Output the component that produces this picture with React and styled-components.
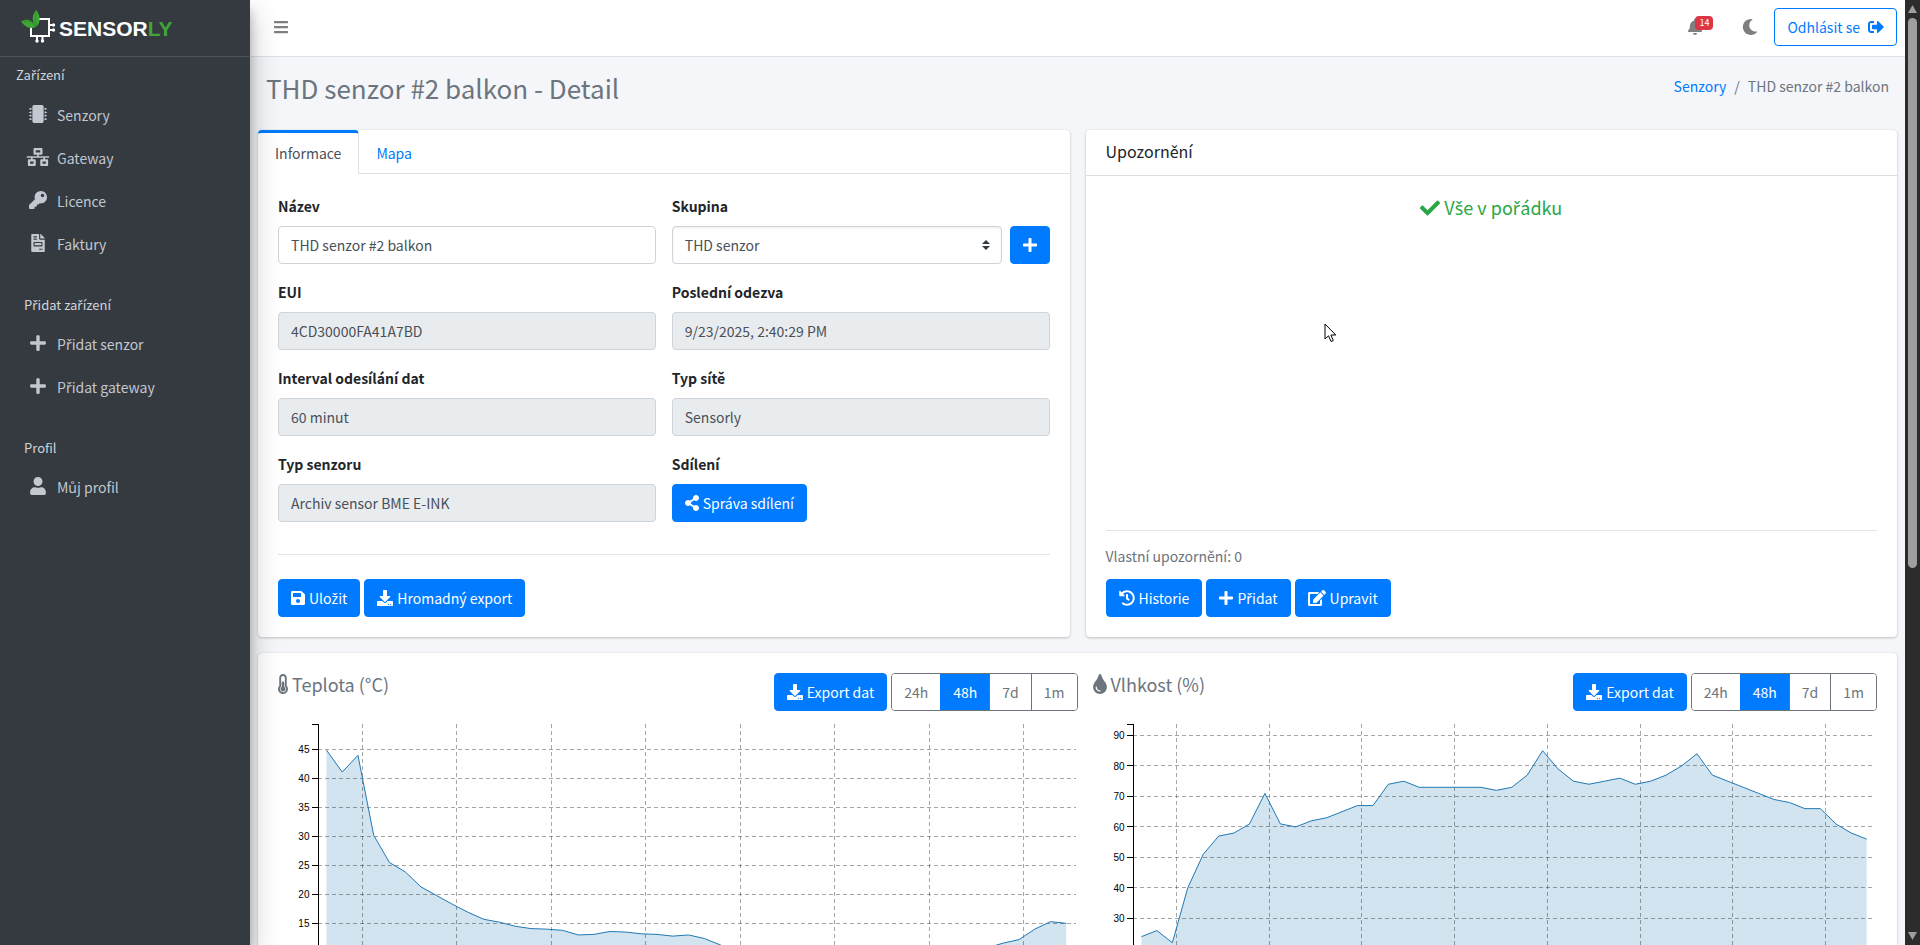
import React from "react";
import styled, { createGlobalStyle } from "styled-components";
import {
	FaBars,
	FaBell,
	FaCheck,
	FaDownload,
	FaEdit,
	FaFileInvoice,
	FaHistory,
	FaKey,
	FaMicrochip,
	FaMoon,
	FaNetworkWired,
	FaPlus,
	FaSave,
	FaShareAlt,
	FaSignOutAlt,
	FaThermometerHalf,
	FaTint,
	FaUser,
} from "react-icons/fa";

const GlobalStyle = createGlobalStyle`
	* {
		box-sizing: border-box;
	}

	body {
		margin: 0;
		background: #f4f6f9;
		color: #212529;
		font-family: "Noto Sans CJK SC", "Noto Sans", sans-serif;
		font-size: 14px;
		line-height: 24px;
	}

	button, input, select {
		font: inherit;
	}

	a {
		color: #007bff;
		text-decoration: none;
	}
`;

const Shell = styled.div`
	display: flex;
	height: 100vh;
	overflow: hidden;
`;

const Sidebar = styled.aside`
	position: relative;
	z-index: 2;
	flex: 0 0 250px;
	background: #343a40;
	box-shadow: 0 14px 28px rgba(0, 0, 0, .25), 0 10px 10px rgba(0, 0, 0, .22);
`;

const Brand = styled.a`
	display: flex;
	height: 57px;
	padding: 9px 20px;
	border-bottom: 1px solid #4b545c;
`;

const NavHeader = styled.h2`
	margin: 0;
	padding: ${(props) => (props.$top ? "6px 16px 8px" : "29px 24px 7px")};
	color: #d0d4db;
	font-size: 13px;
	font-weight: 400;
	line-height: 24px;
`;

const NavList = styled.nav`
	display: flex;
	flex-direction: column;
	gap: 3px;
	padding: 0 8px;
`;

const NavLink = styled.a`
	display: flex;
	align-items: center;
	gap: 5px;
	height: 40px;
	padding: 0 16px;
	color: #c2c7d0;

	svg {
		width: 28px;
		height: 18px;
		margin-bottom: 2px;
	}
`;

const Page = styled.div`
	flex: 1;
	min-width: 0;
`;

const Topbar = styled.header`
	display: flex;
	align-items: center;
	height: 57px;
	padding: 0 8px 2px 24px;
	background: #fff;
	border-bottom: 1px solid #dee2e6;
`;

const IconButton = styled.button`
	position: relative;
	display: flex;
	padding: 0;
	margin-right: ${(props) => props.$gap || 0}px;
	border: 0;
	background: none;
	color: #7f7f7f;
	font-size: 16px;

	svg {
		width: ${(props) => props.$icon || 16}px;
	}
`;

const Badge = styled.span`
	position: absolute;
	top: -3px;
	left: 7px;
	padding: 0 4px;
	border-radius: 4px;
	background: #dc3545;
	color: #fff;
	font-size: 9px;
	line-height: 14px;
`;

const Spacer = styled.div`
	flex: 1;
`;

const Button = styled.button`
	display: inline-flex;
	align-items: center;
	justify-content: center;
	gap: ${(props) => props.$gap || 4}px;
	height: 38px;
	padding: 0 12px;
	border: 1px solid #007bff;
	border-radius: 4px;
	background: ${(props) => (props.$outline ? "#fff" : "#007bff")};
	color: ${(props) => (props.$outline ? "#007bff" : "#fff")};
	white-space: nowrap;

	svg {
		width: ${(props) => props.$icon || 16}px;
		font-size: 16px;
	}
`;

const TitleRow = styled.div`
	display: flex;
	justify-content: space-between;
	padding: 13px 16px 25px;
`;

const Title = styled.h1`
	margin: 0;
	color: #6c757d;
	font-size: 26px;
	font-weight: 400;
	line-height: 35px;
`;

const Breadcrumb = styled.nav`
	display: flex;
	gap: 8px;
	padding-top: 4px;
	color: #6c757d;
`;

const Content = styled.main`
	display: grid;
	grid-template-columns: 1fr 1fr;
	gap: 16px;
	padding: 0 8px;
`;

const Card = styled.section`
	display: flex;
	flex-direction: column;
	grid-column: ${(props) => (props.$wide ? "1 / -1" : "auto")};
	border-radius: 4px;
	background: #fff;
	box-shadow: 0 0 1px rgba(0, 0, 0, .125), 0 1px 3px rgba(0, 0, 0, .2);
`;

const CardBody = styled.div`
	display: flex;
	flex: 1;
	flex-direction: column;
	padding: 20px;
`;

const Tabs = styled.div`
	display: flex;
	height: 44px;
	border-bottom: 1px solid #dee2e6;
`;

const Tab = styled.button`
	height: ${(props) => (props.$active ? 44 : 43)}px;
	padding: ${(props) => (props.$active ? "0 17px 2px" : "3px 17px 0")};
	border: solid transparent;
	border-width: 0 1px 0 0;
	border-radius: 4px 4px 0 0;
	background: none;
	color: #007bff;

	${(props) => props.$active && `
		border-top: 3px solid #007bff;
		border-right-color: #dee2e6;
		background: #fff;
		color: #495057;
	`}
`;

const CardTitle = styled.h2`
	margin: 0;
	padding: 11px 20px 13px;
	border-bottom: 1px solid #dfdfdf;
	font-size: 16px;
	font-weight: 400;
	line-height: 21px;
`;

const FormGrid = styled.form`
	display: grid;
	grid-template-columns: 1fr 1fr;
	gap: 16px;
`;

const Field = styled.div`
	display: flex;
	flex-direction: column;
	align-items: flex-start;
	gap: 8px;
`;

const Label = styled.label`
	font-weight: 700;
`;

const Input = styled.input`
	width: 100%;
	height: 38px;
	padding: 0 12px;
	border: 1px solid #ced4da;
	border-radius: 4px;
	background: ${(props) => (props.readOnly ? "#e9ecef" : "#fff")};
	color: #495057;
`;

const SelectRow = styled.div`
	display: flex;
	gap: 8px;
	width: 100%;
`;

const SelectBox = styled.div`
	display: grid;
	flex: 1;
	align-items: center;

	> * {
		grid-area: 1 / 1;
	}

	svg {
		justify-self: end;
		margin-right: 12px;
		pointer-events: none;
	}
`;

const Select = styled.select`
	width: 100%;
	height: 38px;
	padding: 0 12px;
	border: 1px solid #ced4da;
	border-radius: 4px;
	background: #fff;
	box-shadow: inset 0 1px 2px rgba(0, 0, 0, .075);
	color: #495057;
	appearance: none;
`;

const Divider = styled.hr`
	width: 100%;
	margin: ${(props) => (props.$push ? "auto 0 13px" : "32px 0 24px")};
	border: 0;
	border-top: 1px solid #e2e3e5;
`;

const ButtonRow = styled.div`
	display: flex;
	gap: 4px;
`;

const Status = styled.p`
	display: flex;
	align-items: center;
	justify-content: center;
	gap: 4px;
	margin: 0;
	color: #28a745;
	font-size: 18px;
	line-height: 22px;

	svg {
		font-size: 20px;
	}
`;

const Note = styled.p`
	margin: 0 0 11px;
	color: #6c757d;
`;

const ChartGrid = styled.div`
	display: grid;
	grid-template-columns: 1fr 1fr;
`;

const ChartPanel = styled.div`
	padding-left: ${(props) => (props.$second ? 15 : 0)}px;

	> svg {
		display: block;
		width: 100%;
		margin-top: 8px;
	}
`;

const ChartHead = styled.div`
	display: flex;
	justify-content: space-between;
	align-items: flex-start;
`;

const ChartTitle = styled.h3`
	display: flex;
	align-items: center;
	gap: 4px;
	margin: 0;
	color: #6c757d;
	font-size: 18px;
	font-weight: 400;
	line-height: 22px;

	svg {
		width: ${(props) => props.$icon}px;
		font-size: 20px;
	}
`;

const RangeGroup = styled.div`
	display: flex;
	overflow: hidden;
	border: 1px solid #6c757d;
	border-radius: 4px;
`;

const RangeButton = styled.button`
	height: 36px;
	padding: 0 12px;
	border: 0;
	border-left: ${(props) => (props.$first ? 0 : 1)}px solid ${(props) => (props.$active ? "#007bff" : "#6c757d")};
	background: ${(props) => (props.$active ? "#007bff" : "#fff")};
	color: ${(props) => (props.$active ? "#fff" : "#6c757d")};
`;

const AxisLabel = styled.text`
	fill: #000;
	font-family: "Liberation Sans", Arial, sans-serif;
	font-size: 10px;
	text-anchor: end;
`;

const Scrollbar = styled.div`
	display: flex;
	flex: 0 0 15px;
	flex-direction: column;
	align-items: center;
	justify-content: space-between;
	padding: 5px 0;
	background: #2c2c2c;
`;

const ScrollTrack = styled.div`
	flex: 1;
	width: 9px;
	margin: 5px 0;
`;

const ScrollThumb = styled.div`
	height: 60.5%;
	border-radius: 5px;
	background: #9f9f9f;
`;

const Pointer = styled.svg`
	position: absolute;
	top: 323px;
	left: 1324px;
	z-index: 3;
`;

const Accented = styled.span`
	font-family: "Noto Sans", sans-serif;
`;

const temperature = [
	44.9, 41.1, 44, 30.2, 25.5, 23.9, 21.3, 19.8, 18.3, 16.9, 15.7, 15.2,
	14.5, 14.1, 14, 13.8, 13, 13.1, 13.6, 13.5, 13.2, 13.1, 12.8, 13,
	12.4, 11.3, 10.2, 9.6, 9.1, 8.8, 8.5, 8.2, 8, 7.9, 7.8, 7.8,
	7.9, 8.1, 8.4, 8.8, 9.3, 10, 10.8, 11.6, 12.2, 14, 15.3, 15,
];

const humidity = [
	24, 26, 22, 40, 51, 57, 58, 61, 71, 61, 60, 62,
	63, 65, 67, 67, 74, 75, 73, 73, 73, 73, 73, 72,
	73, 77, 85, 79, 75, 74, 75, 76, 74, 75, 77, 80,
	84, 77, 75, 73, 71, 69, 68, 66, 66, 61, 58, 56,
];

const navSections = [
	{
		title: "Zařízení",
		items: [
			{ icon: FaMicrochip, text: "Senzory" },
			{ icon: FaNetworkWired, text: "Gateway" },
			{ icon: FaKey, text: "Licence" },
			{ icon: FaFileInvoice, text: "Faktury" },
		],
	},
	{
		title: "Přidat zařízení",
		items: [
			{ icon: FaPlus, text: "Přidat senzor" },
			{ icon: FaPlus, text: "Přidat gateway" },
		],
	},
	{
		title: "Profil",
		items: [{ icon: FaUser, text: "Můj profil" }],
	},
];

// The page font has no ř, š and ž, those letters come from Noto Sans.
const Czech = ({ children }) => (
	<span>
		{children.split(/([řšž])/).map((part, i) => (
			i % 2 ? <Accented key={i}>{part}</Accented> : part
		))}
	</span>
);

const Logo = () => (
	<svg width="170" height="36" viewBox="0 0 170 36" role="img" aria-label="Sensorly">
		<g fill="none" stroke="#fff" strokeWidth="2">
			<path d="M18 10H29V27H11V18" />
			<path d="M29 16H33M29 21H33M17 27V31M22.500 27V31" />
		</g>
		<g fill="#fff">
			<circle cx="33.500" cy="16" r="1.700" />
			<circle cx="33.500" cy="21" r="1.700" />
			<circle cx="17" cy="32" r="1.700" />
			<circle cx="22.500" cy="32" r="1.700" />
		</g>
		<path d="M16 18C11 20.500 5 18.500 1 12.500C6 9.500 12 10 16 18Z" fill="#3fa535" />
		<path d="M16 18C11 12 12 5 16.500 1C20 6 21.500 13 16 18Z" fill="#3fa535" />
		<path d="M16 18C11 12 9 12 3 12.500M16 18C15 12 15 8 16.500 3" fill="none" stroke="#2b7f27" strokeWidth=".6" />
		<text x="39" y="27" fill="#fff" fontFamily="Liberation Sans, Arial, sans-serif" fontWeight="700" fontSize="21">
			SENSOR<tspan fill="#3fa535">LY</tspan>
		</text>
	</svg>
);

// Coordinates are in the chart's own units, the svg scales with its column.
const AreaChart = ({ width, axisX, endX, firstX, step, ticks, tickY, tickGap, lineX, lineGap, perUnit, data, label }) => {
	const y = (value) => tickY + (ticks[0] - value) * perUnit;
	const points = data.map((value, i) => `${firstX + i * step},${y(value)}`);
	const lastX = firstX + (data.length - 1) * step;
	return (
		<svg viewBox={`0 0 ${width} 300`} role="img" aria-label={label}>
			<path
				d={`M${points.join("L")}L${lastX},290L${firstX},290Z`}
				fill="#1f77b4"
				fillOpacity=".2"
			/>
			<g stroke="#000" strokeOpacity=".35" strokeDasharray="4 3" shapeRendering="crispEdges">
				{ticks.map((tick, i) => (
					<path key={tick} d={`M${axisX} ${tickY + i * tickGap}H${endX}`} />
				))}
				{[0, 1, 2, 3, 4, 5, 6, 7, 8].map((i) => lineX + i * lineGap).filter((x) => x < endX).map((x) => (
					<path key={x} d={`M${x} 5V290`} />
				))}
			</g>
			<path d={`M${points.join("L")}`} fill="none" stroke="#1f77b4" />
			<path d={`M${axisX - 6} 5.500H${axisX}V290`} fill="none" stroke="#000" shapeRendering="crispEdges" />
			{ticks.map((tick, i) => (
				<g key={tick}>
					<path d={`M${axisX - 6} ${tickY + i * tickGap}H${axisX}`} stroke="#000" shapeRendering="crispEdges" />
					<AxisLabel x={axisX - 9} y={tickY + i * tickGap + 4}>{tick}</AxisLabel>
				</g>
			))}
		</svg>
	);
};

const ChartTools = () => (
	<ButtonRow>
		<Button type="button"><FaDownload />Export dat</Button>
		<RangeGroup>
			{["24h", "48h", "7d", "1m"].map((range, i) => (
				<RangeButton key={range} type="button" $first={i === 0} $active={range === "48h"}>{range}</RangeButton>
			))}
		</RangeGroup>
	</ButtonRow>
);

const TextField = ({ id, label, value, readOnly }) => (
	<Field>
		<Label htmlFor={id}>{label}</Label>
		<Input id={id} defaultValue={value} readOnly={readOnly} />
	</Field>
);

const App = () => (
	<>
		<GlobalStyle />
		<Shell>
			<Sidebar>
				<Brand href="#"><Logo /></Brand>
				{navSections.map((section, i) => (
					<div key={section.title}>
						<NavHeader $top={i === 0}><Czech>{section.title}</Czech></NavHeader>
						<NavList>
							{section.items.map(({ icon: Icon, text }) => (
								<NavLink key={text} href="#"><Icon /><Czech>{text}</Czech></NavLink>
							))}
						</NavList>
					</div>
				))}
			</Sidebar>

			<Page>
				<Topbar>
					<IconButton type="button" aria-label="Menu" $icon={14}><FaBars /></IconButton>
					<Spacer />
					<IconButton type="button" aria-label="Oznámení" $icon={14} $gap={40}>
						<FaBell />
						<Badge>14</Badge>
					</IconButton>
					<IconButton type="button" aria-label="Tmavý režim" $gap={16}><FaMoon /></IconButton>
					<Button type="button" $outline $gap={8}>Odhlásit se <FaSignOutAlt /></Button>
				</Topbar>

				<TitleRow>
					<Title>THD senzor #2 balkon - Detail</Title>
					<Breadcrumb>
						<a href="#">Senzory</a>
						<span>/</span>
						<span>THD senzor #2 balkon</span>
					</Breadcrumb>
				</TitleRow>

				<Content>
					<Card>
						<Tabs>
							<Tab type="button" $active>Informace</Tab>
							<Tab type="button">Mapa</Tab>
						</Tabs>
						<CardBody>
							<FormGrid>
								<TextField id="name" label="Název" value="THD senzor #2 balkon" />
								<Field>
									<Label htmlFor="group">Skupina</Label>
									<SelectRow>
										<SelectBox>
											<Select id="group">
												<option>THD senzor</option>
											</Select>
											<svg width="8" height="10" viewBox="0 0 4 5">
												<path fill="#343a40" d="M2 0L0 2h4zm0 5L0 3h4z" />
											</svg>
										</SelectBox>
										<Button type="button" aria-label="Přidat skupinu" $icon={14}><FaPlus /></Button>
									</SelectRow>
								</Field>
								<TextField id="eui" label="EUI" value="4CD30000FA41A7BD" readOnly />
								<TextField id="last" label="Poslední odezva" value="9/23/2025, 2:40:29 PM" readOnly />
								<TextField id="interval" label="Interval odesílání dat" value="60 minut" readOnly />
								<TextField id="network" label="Typ sítě" value="Sensorly" readOnly />
								<TextField id="type" label="Typ senzoru" value="Archiv sensor BME E-INK" readOnly />
								<Field>
									<Label htmlFor="share">Sdílení</Label>
									<Button id="share" type="button" $icon={14}><FaShareAlt />Správa sdílení</Button>
								</Field>
							</FormGrid>
							<Divider />
							<ButtonRow>
								<Button type="button" $icon={14}><FaSave /><Czech>Uložit</Czech></Button>
								<Button type="button"><FaDownload />Hromadný export</Button>
							</ButtonRow>
						</CardBody>
					</Card>

					<Card>
						<CardTitle>Upozornění</CardTitle>
						<CardBody>
							<Status><FaCheck /><Czech>Vše v pořádku</Czech></Status>
							<Divider $push />
							<Note>Vlastní upozornění: 0</Note>
							<ButtonRow>
								<Button type="button"><FaHistory />Historie</Button>
								<Button type="button" $icon={14}><FaPlus /><Czech>Přidat</Czech></Button>
								<Button type="button" $icon={18}><FaEdit />Upravit</Button>
							</ButtonRow>
						</CardBody>
					</Card>

					<Card $wide>
						<CardBody>
							<ChartGrid>
								<ChartPanel>
									<ChartHead>
										<ChartTitle $icon={10}><FaThermometerHalf />Teplota (°C)</ChartTitle>
										<ChartTools />
									</ChartHead>
									<AreaChart
										label="Teplota"
										width={800}
										axisX={40.5}
										endX={798}
										firstX={48.5}
										step={15.75}
										ticks={[45, 40, 35, 30, 25, 20, 15]}
										tickY={30.5}
										tickGap={29}
										perUnit={5.8}
										lineX={84.5}
										lineGap={94.5}
										data={temperature}
									/>
								</ChartPanel>
								<ChartPanel $second>
									<ChartHead>
										<ChartTitle $icon={14}><FaTint />Vlhkost (%)</ChartTitle>
										<ChartTools />
									</ChartHead>
									<AreaChart
										label="Vlhkost"
										width={785}
										axisX={40.5}
										endX={782}
										firstX={48.5}
										step={15.44}
										ticks={[90, 80, 70, 60, 50, 40, 30]}
										tickY={16.5}
										tickGap={30.5}
										perUnit={3.05}
										lineX={83.5}
										lineGap={92.8}
										data={humidity}
									/>
								</ChartPanel>
							</ChartGrid>
						</CardBody>
					</Card>
				</Content>
			</Page>

			<Scrollbar>
				<svg width="9" height="8"><path d="M4.500 0L9 8H0Z" fill="#9f9f9f" /></svg>
				<ScrollTrack><ScrollThumb /></ScrollTrack>
				<svg width="9" height="8"><path d="M4.500 8L9 0H0Z" fill="#9f9f9f" /></svg>
			</Scrollbar>

			<Pointer width="13" height="20" viewBox="0 0 13 20">
				<path d="M1 1V16L4.500 12.800L7 18.500L9.300 17.500L6.900 12H11.800Z" fill="#fff" stroke="#000" />
			</Pointer>
		</Shell>
	</>
);

export default App;
